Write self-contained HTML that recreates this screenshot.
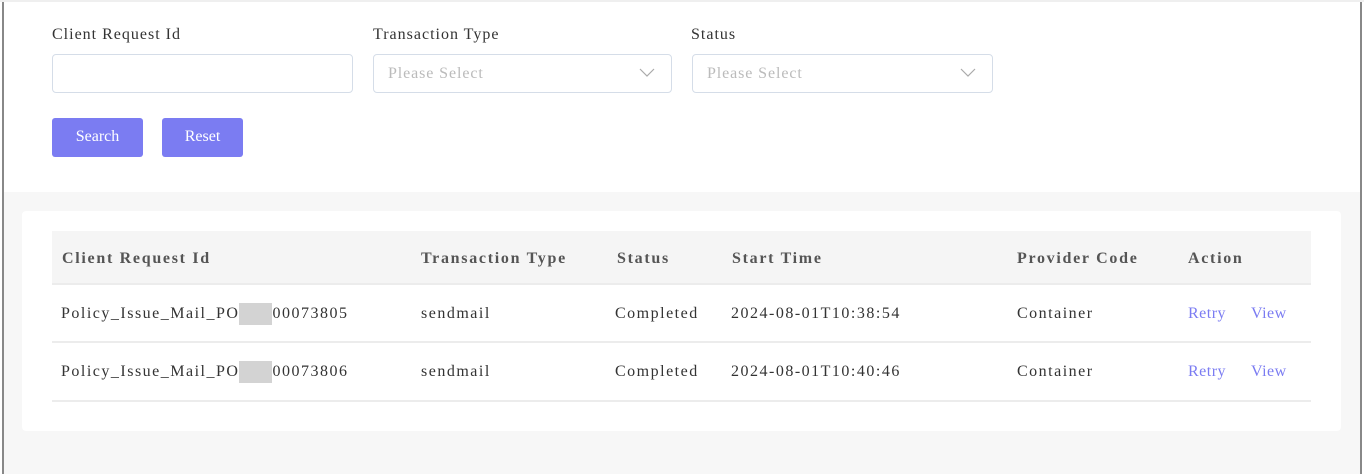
<!DOCTYPE html><html><head><style>
body{margin:0;width:1364px;height:474px;overflow:hidden;background:#fff;font-family:"Liberation Serif","DejaVu Serif",serif;position:relative}
.abs{position:absolute}
.lbl{font-size:16px;color:#333;top:26px;letter-spacing:1px}
.inp{top:54px;height:39px;border:1px solid #d5dde8;border-radius:4px;background:#fff;box-sizing:border-box}
.ph{color:#bbb;font-size:16px;position:absolute;left:14px;top:10px;letter-spacing:0.9px}
.chev{position:absolute;right:16px;top:13px}
.btn{top:118px;height:39px;background:#7b7cf2;border-radius:3px;color:#fff;font-size:16px;text-align:center;line-height:38px}
.cell{font-size:16px;color:#333;line-height:20px;letter-spacing:1.5px}
.th{font-weight:bold;color:#555;top:249px;letter-spacing:1.7px}
.ln{height:2px;background:#ececec;left:52px;width:1259px}
.lk{color:#7b7cf2;letter-spacing:0.5px}
.mask{background:#d3d3d3;display:inline-block;width:33px;height:22px;vertical-align:top;margin-top:-1px}
</style></head><body>
<div class="abs" style="left:0;top:0;width:1364px;height:2px;background:#efefef"></div>
<div class="abs" style="left:2px;top:2px;width:2px;height:472px;background:#888"></div>
<div class="abs" style="left:1360px;top:2px;width:2px;height:472px;background:#888"></div>
<div class="abs" style="left:4px;top:192px;width:1356px;height:282px;background:#f7f7f7"></div>
<div class="abs" style="left:22px;top:211px;width:1319px;height:220px;background:#fff;border-radius:4px"></div>

<div class="abs lbl" style="left:52px">Client Request Id</div>
<div class="abs lbl" style="left:373px">Transaction Type</div>
<div class="abs lbl" style="left:691px">Status</div>
<div class="abs inp" style="left:52px;width:301px"></div>
<div class="abs inp" style="left:373px;width:299px"><span class="ph">Please Select</span><svg class="chev" width="16" height="10"><path d="M1 1l7 7 7-7" fill="none" stroke="#aaa" stroke-width="1.2"/></svg></div>
<div class="abs inp" style="left:692px;width:301px"><span class="ph">Please Select</span><svg class="chev" width="16" height="10"><path d="M1 1l7 7 7-7" fill="none" stroke="#aaa" stroke-width="1.2"/></svg></div>
<div class="abs btn" style="left:52px;width:91px">Search</div>
<div class="abs btn" style="left:162px;width:81px">Reset</div>

<div class="abs" style="left:52px;top:231px;width:1259px;height:53px;background:#f5f5f5"></div>
<div class="abs ln" style="top:283px"></div>
<div class="abs ln" style="top:341px"></div>
<div class="abs ln" style="top:400px"></div>
<div class="abs cell th" style="left:62px">Client Request Id</div>
<div class="abs cell th" style="left:421px">Transaction Type</div>
<div class="abs cell th" style="left:617px">Status</div>
<div class="abs cell th" style="left:732px">Start Time</div>
<div class="abs cell th" style="left:1017px">Provider Code</div>
<div class="abs cell th" style="left:1188px">Action</div>

<div class="abs cell" style="left:61px;top:304px">Policy_Issue_Mail_PO<span class="mask"></span>00073805</div>
<div class="abs cell" style="left:421px;top:304px">sendmail</div>
<div class="abs cell" style="left:615px;top:304px">Completed</div>
<div class="abs cell" style="left:731px;top:304px">2024-08-01T10:38:54</div>
<div class="abs cell" style="left:1017px;top:304px">Container</div>
<div class="abs cell lk" style="left:1188px;top:304px">Retry</div>
<div class="abs cell lk" style="left:1251px;top:304px">View</div>

<div class="abs cell" style="left:61px;top:362px">Policy_Issue_Mail_PO<span class="mask"></span>00073806</div>
<div class="abs cell" style="left:421px;top:362px">sendmail</div>
<div class="abs cell" style="left:615px;top:362px">Completed</div>
<div class="abs cell" style="left:731px;top:362px">2024-08-01T10:40:46</div>
<div class="abs cell" style="left:1017px;top:362px">Container</div>
<div class="abs cell lk" style="left:1188px;top:362px">Retry</div>
<div class="abs cell lk" style="left:1251px;top:362px">View</div>
</body></html>
